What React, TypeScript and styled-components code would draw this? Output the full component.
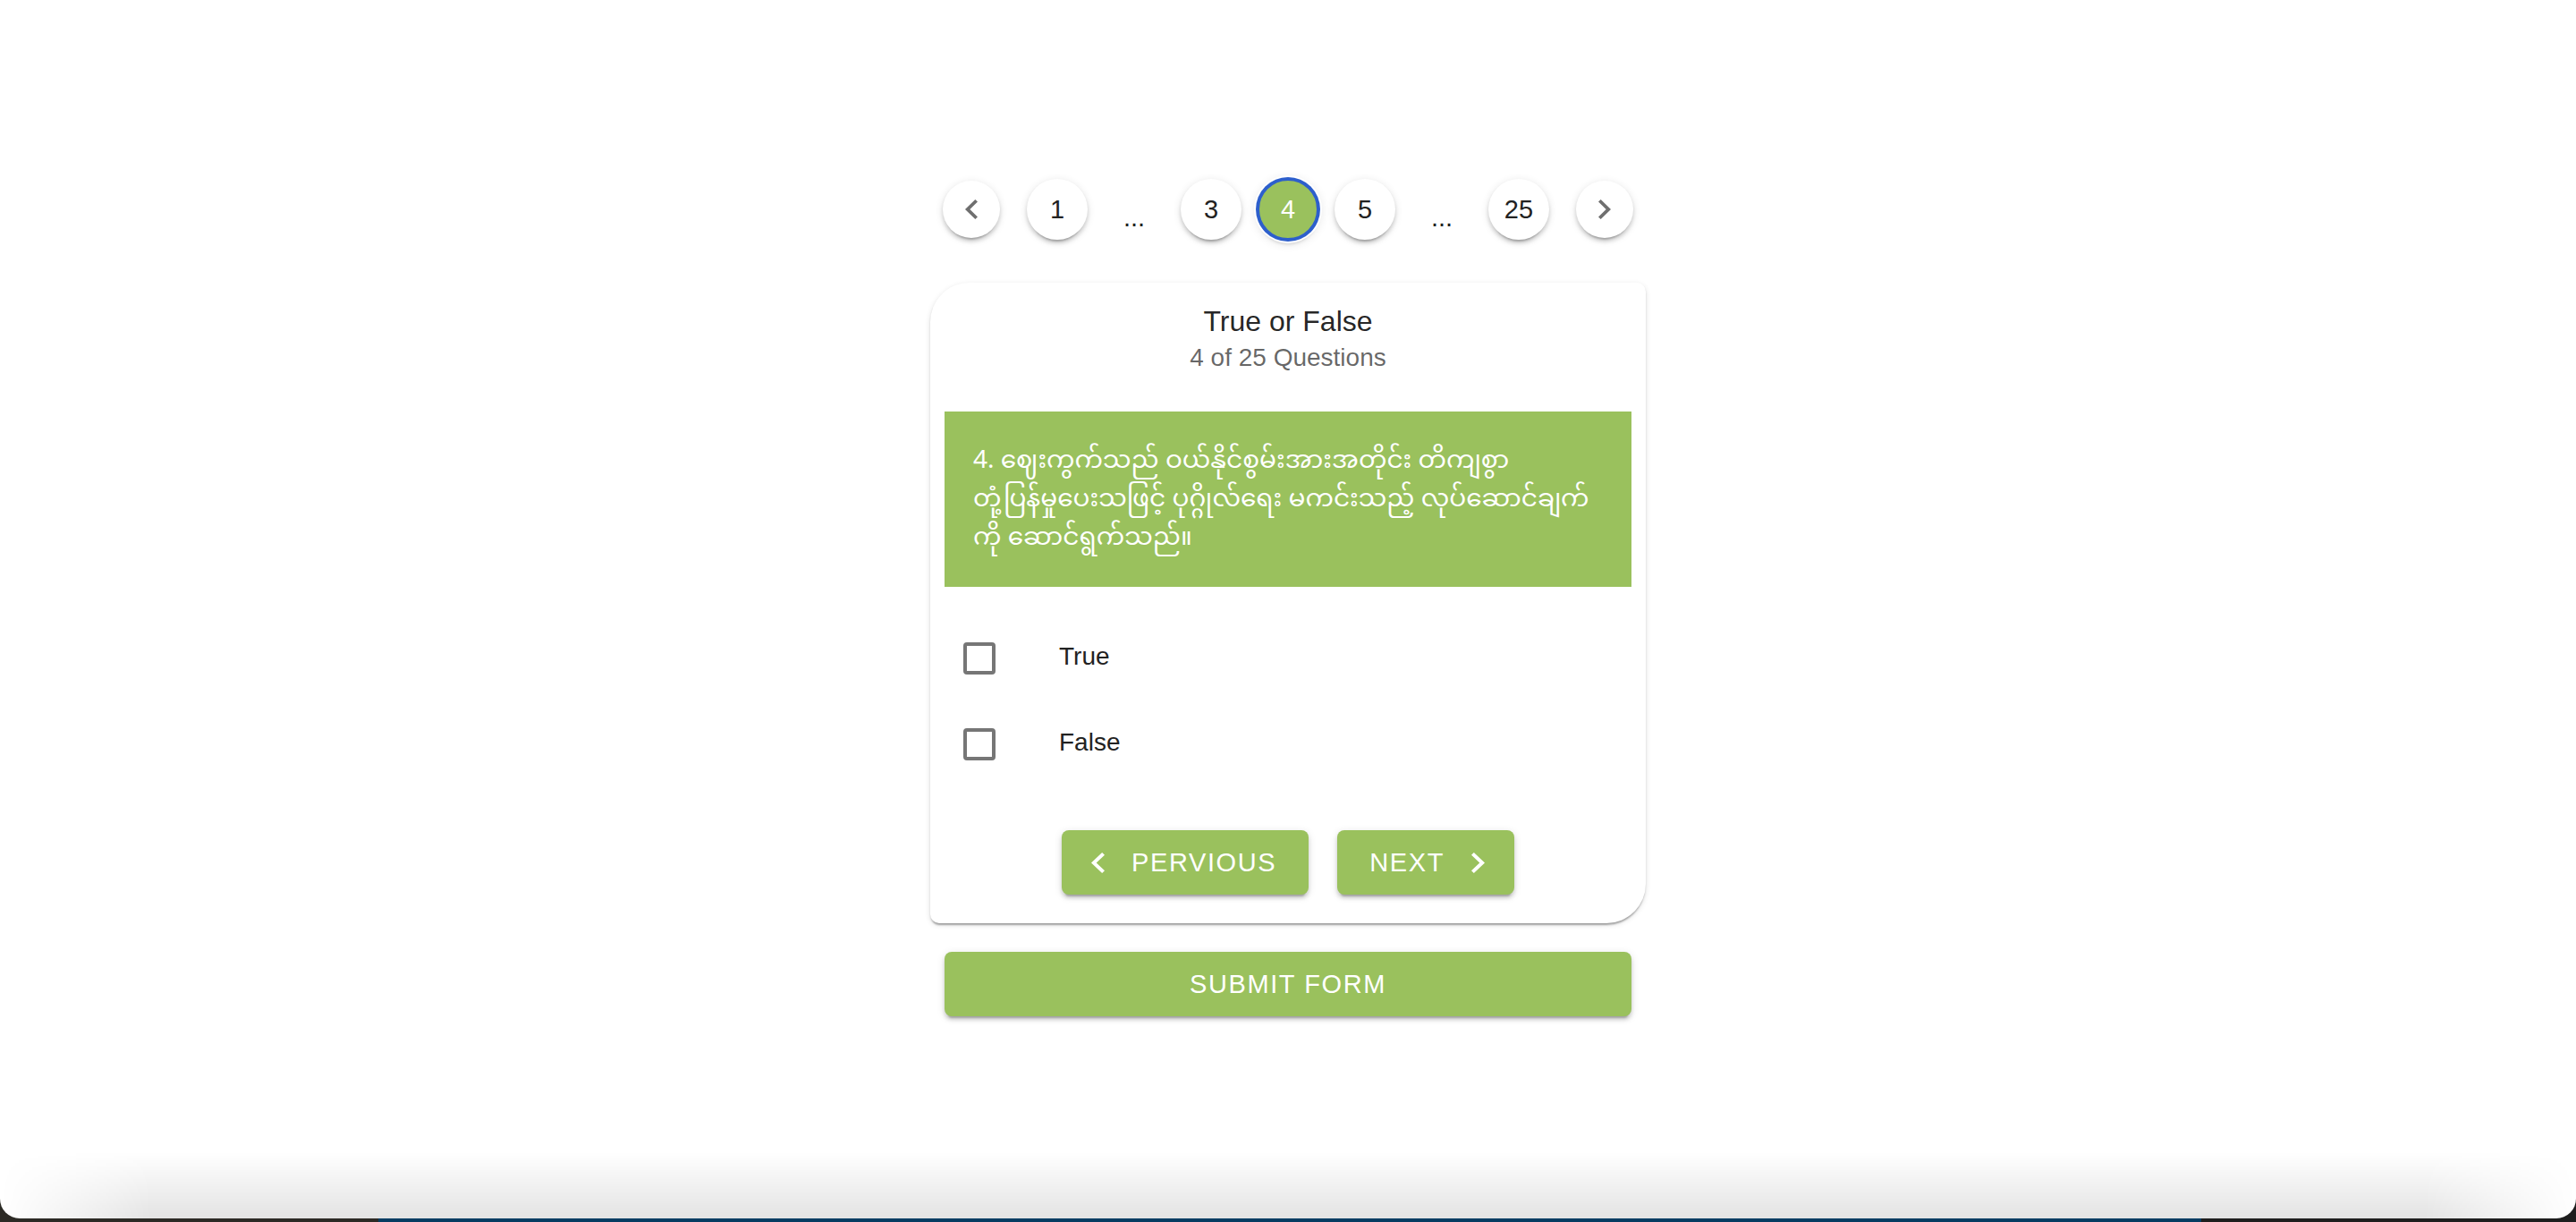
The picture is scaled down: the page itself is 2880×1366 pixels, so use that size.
import React from "react";
import styled, { createGlobalStyle, css } from "styled-components";

const GREEN = "#9ac15d";
const BLUE = "#2d5fcc";

const GlobalStyle = createGlobalStyle`
  html, body {
    margin: 0;
    padding: 0;
    background: #ffffff;
  }
  body {
    font-family: "Liberation Sans", Arial, Helvetica, sans-serif;
    -webkit-font-smoothing: antialiased;
  }
  * { box-sizing: border-box; }
`;

const Screen = styled.div`
  height: 1366px;
  overflow: hidden;
  background: linear-gradient(
    to right,
    #2c2a25 0,
    #2c2a25 423px,
    #053c62 423px,
    #053c62 2461px,
    #1e1e1e 2461px
  );
`;

const Window = styled.main`
  position: relative;
  height: 1362px;
  background: #ffffff;
  border-radius: 0 0 22px 22px;
  overflow: hidden;
  display: flex;
  flex-direction: column;
  align-items: center;
  padding-top: 200px;
`;

const BottomShade = styled.div`
  position: absolute;
  left: 0;
  right: 0;
  bottom: 0;
  height: 74px;
  pointer-events: none;
  background: linear-gradient(to bottom, rgba(0, 0, 0, 0), rgba(0, 0, 0, 0.11));
  -webkit-mask-image: linear-gradient(
    to right,
    transparent 0,
    #000 170px,
    #000 calc(100% - 170px),
    transparent 100%
  );
  mask-image: linear-gradient(
    to right,
    transparent 0,
    #000 170px,
    #000 calc(100% - 170px),
    transparent 100%
  );
`;

const elevation = css`
  box-shadow: 0 6px 2px -4px rgba(0, 0, 0, 0.2), 0 4px 4px 0 rgba(0, 0, 0, 0.14),
    0 2px 10px 0 rgba(0, 0, 0, 0.12);
`;

const Pagination = styled.nav`
  display: flex;
  align-items: center;
  gap: 18px;
  height: 68px;
`;

const PageButton = styled.button<{ $active?: boolean }>`
  width: 68px;
  height: 68px;
  border-radius: 50%;
  border: none;
  padding: 0;
  display: flex;
  align-items: center;
  justify-content: center;
  font-family: "Liberation Sans", Arial, sans-serif;
  font-size: 29px;
  color: #222222;
  background: #ffffff;
  cursor: pointer;
  ${elevation};
  ${(p) =>
    p.$active &&
    css`
      background: ${GREEN};
      color: #ffffff;
      border: 2px solid ${BLUE};
      box-shadow: 0 0 0 2px ${BLUE}, 0 0 0 4px #ffffff,
        0 6px 4px -2px rgba(0, 0, 0, 0.22), 0 2px 12px 2px rgba(0, 0, 0, 0.12);
    `}
`;

const ArrowButton = styled.button`
  width: 64px;
  height: 64px;
  margin: 0 12px;
  border-radius: 50%;
  border: none;
  padding: 0;
  display: flex;
  align-items: center;
  justify-content: center;
  background: #ffffff;
  color: #6f6f6f;
  cursor: pointer;
  ${elevation};
`;

const Ellipsis = styled.span`
  width: 68px;
  text-align: center;
  font-size: 29px;
  color: #222222;
  padding-top: 18px;
`;

const Card = styled.section`
  width: 800px;
  margin-top: 48px;
  background: #ffffff;
  border-radius: 44px 10px 44px 10px;
  padding: 21px 16px 32px;
  box-shadow: 0 4px 2px -2px rgba(0, 0, 0, 0.2), 0 2px 2px 0 rgba(0, 0, 0, 0.14),
    0 2px 6px 0 rgba(0, 0, 0, 0.12);
  display: flex;
  flex-direction: column;
`;

const Title = styled.h2`
  margin: 0;
  font-weight: 400;
  font-size: 32px;
  line-height: 44px;
  text-align: center;
  color: rgba(0, 0, 0, 0.87);
`;

const Subtitle = styled.p`
  margin: 0;
  font-size: 28px;
  line-height: 38px;
  text-align: center;
  color: rgba(0, 0, 0, 0.6);
`;

const QuestionBox = styled.div`
  margin-top: 41px;
  background: ${GREEN};
  color: #ffffff;
  padding: 35px 24px 32px 32px;
  font-family: "Noto Sans Myanmar", "Padauk", "Myanmar Text", "Myanmar Sangam MN",
    "Liberation Sans", sans-serif;
  font-size: 28px;
  line-height: 43px;
`;

const QuestionLine = styled.span`
  display: block;
  white-space: nowrap;
`;

const Options = styled.div`
  margin-top: 30px;
  display: flex;
  flex-direction: column;
`;

const OptionRow = styled.label`
  height: 96px;
  display: flex;
  align-items: center;
  padding-left: 21px;
  cursor: pointer;
`;

const CheckBox = styled.span`
  width: 36px;
  height: 36px;
  border: 4px solid #767676;
  border-radius: 4px;
  margin-top: 3px;
  flex-shrink: 0;
`;

const OptionText = styled.span`
  margin-left: 71px;
  font-size: 28px;
  color: #222222;
`;

const NavRow = styled.div`
  margin-top: 50px;
  display: flex;
  justify-content: center;
  gap: 32px;
`;

const buttonText = css`
  font-family: "Liberation Sans", Arial, sans-serif;
  font-size: 29px;
  letter-spacing: 1.6px;
  text-transform: uppercase;
  color: #ffffff;
`;

const NavButton = styled.button<{ $iconSide: "left" | "right" }>`
  height: 72px;
  display: flex;
  align-items: center;
  gap: 30px;
  border: none;
  border-radius: 8px;
  background: ${GREEN};
  cursor: pointer;
  padding: ${(p) => (p.$iconSide === "left" ? "0 36px 0 33px" : "0 33px 0 36px")};
  ${buttonText};
  ${elevation};
`;

const SubmitButton = styled.button`
  width: 768px;
  height: 72px;
  margin-top: 32px;
  border: none;
  border-radius: 8px;
  background: ${GREEN};
  cursor: pointer;
  ${buttonText};
  ${elevation};
`;

const ChevronLeft = ({ w, h }: { w: number; h: number }) => (
  <svg width={w} height={h} viewBox="8 6 7.41 12" preserveAspectRatio="none" aria-hidden>
    <path d="M15.41 7.41 14 6l-6 6 6 6 1.41-1.41L10.83 12z" fill="currentColor" />
  </svg>
);

const ChevronRight = ({ w, h }: { w: number; h: number }) => (
  <svg width={w} height={h} viewBox="8.59 6 7.41 12" preserveAspectRatio="none" aria-hidden>
    <path d="M10 6 8.59 7.41 13.17 12l-4.58 4.59L10 18l6-6z" fill="currentColor" />
  </svg>
);

type PageItem = number | "...";
const pages: PageItem[] = [1, "...", 3, 4, 5, "...", 25];
const current = 4;

const questionLines = [
  "4. ဈေးကွက်သည် ဝယ်နိုင်စွမ်းအားအတိုင်း တိကျစွာ",
  "တုံ့ပြန်မှုပေးသဖြင့် ပုဂ္ဂိုလ်ရေး မကင်းသည့် လုပ်ဆောင်ချက်",
  "ကို ဆောင်ရွက်သည်။",
];

export default function App() {
  return (
    <>
      <GlobalStyle />
      <Screen>
        <Window>
          <Pagination aria-label="pagination">
            <ArrowButton aria-label="previous page">
              <ChevronLeft w={14} h={22} />
            </ArrowButton>
            {pages.map((p, i) =>
              p === "..." ? (
                <Ellipsis key={`e${i}`}>...</Ellipsis>
              ) : (
                <PageButton key={p} $active={p === current}>
                  {p}
                </PageButton>
              )
            )}
            <ArrowButton aria-label="next page">
              <ChevronRight w={14} h={22} />
            </ArrowButton>
          </Pagination>

          <Card>
            <Title>True or False</Title>
            <Subtitle>4 of 25 Questions</Subtitle>
            <QuestionBox>
              {questionLines.map((line) => (
                <QuestionLine key={line}>{line}</QuestionLine>
              ))}
            </QuestionBox>
            <Options>
              <OptionRow>
                <CheckBox />
                <OptionText>True</OptionText>
              </OptionRow>
              <OptionRow>
                <CheckBox />
                <OptionText>False</OptionText>
              </OptionRow>
            </Options>
            <NavRow>
              <NavButton $iconSide="left">
                <ChevronLeft w={15} h={23} />
                Pervious
              </NavButton>
              <NavButton $iconSide="right">
                Next
                <ChevronRight w={15} h={23} />
              </NavButton>
            </NavRow>
          </Card>

          <SubmitButton>Submit Form</SubmitButton>
          <BottomShade />
        </Window>
      </Screen>
    </>
  );
}
